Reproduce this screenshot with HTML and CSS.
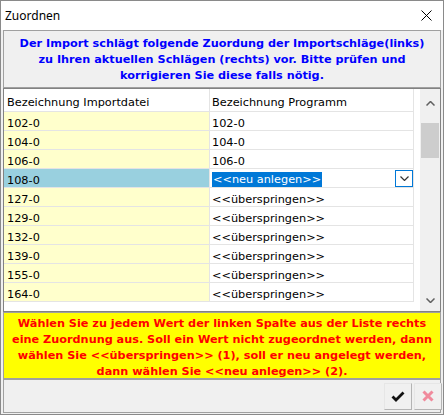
FILE: index.html
```html
<!DOCTYPE html>
<html lang="de">
<head>
<meta charset="utf-8">
<title>Zuordnen</title>
<link rel="stylesheet" href="styles.css">
</head>
<body>
<div class="window">
  <div class="titlebar">
    <span class="title">Zuordnen</span>
    <svg class="close" width="11" height="11" viewBox="0 0 11 11"><path d="M0.5 0.5 L10.5 10.5 M10.5 0.5 L0.5 10.5" stroke="#000" stroke-width="1" fill="none"/></svg>
  </div>
  <div class="client">
    <div class="panel info">
      <p>Der Import schlägt folgende Zuordung der Importschläge(links)<br>zu Ihren aktuellen Schlägen (rechts) vor. Bitte prüfen und<br>korrigieren Sie diese falls nötig.</p>
    </div>

    <div class="panel grid">
      <div class="table">
        <div class="row head">
          <div class="cell">Bezeichnung Importdatei</div>
          <div class="cell">Bezeichnung Programm</div>
        </div>
        <div class="row"><div class="cell src">102-0</div><div class="cell">102-0</div></div>
        <div class="row"><div class="cell src">104-0</div><div class="cell">104-0</div></div>
        <div class="row"><div class="cell src">106-0</div><div class="cell">106-0</div></div>
        <div class="row current">
          <div class="cell src">108-0</div>
          <div class="cell editor">
            <span class="selected-text">&lt;&lt;neu anlegen&gt;&gt;</span>
            <span class="dropdown"><svg width="9" height="5" viewBox="0 0 9 5"><path d="M0.5 0.5 L4.5 4.5 L8.5 0.5" stroke="#333" stroke-width="1.2" fill="none"/></svg></span>
          </div>
        </div>
        <div class="row"><div class="cell src">127-0</div><div class="cell">&lt;&lt;überspringen&gt;&gt;</div></div>
        <div class="row"><div class="cell src">129-0</div><div class="cell">&lt;&lt;überspringen&gt;&gt;</div></div>
        <div class="row"><div class="cell src">132-0</div><div class="cell">&lt;&lt;überspringen&gt;&gt;</div></div>
        <div class="row"><div class="cell src">139-0</div><div class="cell">&lt;&lt;überspringen&gt;&gt;</div></div>
        <div class="row"><div class="cell src">155-0</div><div class="cell">&lt;&lt;überspringen&gt;&gt;</div></div>
        <div class="row"><div class="cell src">164-0</div><div class="cell">&lt;&lt;überspringen&gt;&gt;</div></div>
      </div>
      <div class="scrollbar">
        <div class="arrow up"><svg width="9" height="5" viewBox="0 0 9 5"><path d="M0.5 4.5 L4.5 0.5 L8.5 4.5" stroke="#606060" stroke-width="1.5" fill="none"/></svg></div>
        <div class="track"><div class="thumb"></div></div>
        <div class="arrow down"><svg width="9" height="5" viewBox="0 0 9 5"><path d="M0.5 0.5 L4.5 4.5 L8.5 0.5" stroke="#606060" stroke-width="1.5" fill="none"/></svg></div>
      </div>
    </div>

    <div class="panel hint">
      <p>Wählen Sie zu jedem Wert der linken Spalte aus der Liste rechts<br>eine Zuordnung aus. Soll ein Wert nicht zugeordnet werden, dann<br>wählen Sie &lt;&lt;überspringen&gt;&gt; (1), soll er neu angelegt werden,<br>dann wählen Sie &lt;&lt;neu anlegen&gt;&gt; (2).</p>
    </div>

    <div class="panel actions">
      <button class="btn ok" type="button">
        <svg width="14" height="11" viewBox="0 0 14 11"><path d="M1.5 5.5 L5 9 L12.5 1.5" stroke="#111" stroke-width="2.8" fill="none" stroke-linejoin="miter"/></svg>
      </button>
      <button class="btn cancel" type="button" disabled>
        <svg width="12" height="12" viewBox="0 0 12 12"><path d="M1.5 1.5 L10.5 10.5 M10.5 1.5 L1.5 10.5" stroke="#f08a9c" stroke-width="3" fill="none"/></svg>
      </button>
    </div>
  </div>
</div>
</body>
</html>
```

FILE: styles.css
```css
body {
  margin: 0;
  background: #f0f0f0;
}

.window {
  width: 444px;
  height: 415px;
  box-sizing: border-box;
  border: 1px solid #8a8a8a;
  background: #f0f0f0;
  display: flex;
  flex-direction: column;
}

/* title bar */
.titlebar {
  height: 29px;
  flex: none;
  background: #fff;
  display: flex;
  align-items: center;
  justify-content: space-between;
  padding-left: 4px;
  font-family: "Noto Sans", "Open Sans", sans-serif;
  font-size: 12px;
  color: #000;
}

.close {
  margin-right: 11px;
}

/* dialog body */
.client {
  flex: 1;
  display: flex;
  flex-direction: column;
  padding: 0 2px 1px;
}

.panel {
  box-sizing: border-box;
  border: 1px solid #a0a0a0;
  flex: none;
}

.info,
.hint {
  text-align: center;
  font-family: "DejaVu Sans", sans-serif;
  font-weight: bold;
  font-size: 11.25px;
  white-space: nowrap;
}

.info p,
.hint p {
  margin: 0;
}

.info {
  height: 58px;
  color: #0000ff;
  line-height: 16px;
  padding-top: 5px;
}

/* data grid */
.grid {
  height: 224px;
  border-color: #828282;
  background: #fff;
  display: flex;
  font-family: "DejaVu Sans", sans-serif;
  font-size: 11.3px;
  color: #000;
}

.table {
  flex: 1;
}

.row {
  display: grid;
  grid-template-columns: 206px 204px;
  height: 19px;
}

.cell {
  box-sizing: border-box;
  border-right: 1px solid #e4e4e4;
  border-bottom: 1px solid #e4e4e4;
  padding: 5px 0 0 3px;
  line-height: 13px;
  white-space: nowrap;
  overflow: hidden;
}

.row .cell + .cell {
  padding-left: 2px;
}

.head {
  height: 23px;
}

.head .cell {
  padding-top: 7px;
  background: #fff;
}

.src {
  background: #ffffcc;
}

.current .src {
  background: #99d0df;
}

.editor {
  display: flex;
  align-items: flex-start;
  padding: 1px 0 0 1px;
}

.selected-text {
  background: #0078d7;
  color: #fff;
  padding: 2px 1px 0 1px;
  height: 13px;
  margin-top: 2px;
  line-height: 12px;
}

.dropdown {
  margin-left: auto;
  width: 18px;
  height: 17px;
  box-sizing: border-box;
  border: 1px solid #0078d7;
  display: flex;
  align-items: center;
  justify-content: center;
  background: #fff;
}

/* vertical scrollbar */
.scrollbar {
  width: 20px;
  background: #f0f0f0;
  display: flex;
  flex-direction: column;
}

.arrow {
  display: flex;
  align-items: center;
  justify-content: center;
}

.arrow.up {
  height: 28px;
}

.arrow.down {
  height: 22px;
}

.track {
  flex: 1;
  padding: 6px 1px 0 1px;
}

.thumb {
  height: 35px;
  background: #cdcdcd;
}

/* hint */
.hint {
  height: 67px;
  background: #ffff00;
  color: #ff0000;
  line-height: 16px;
  padding-top: 3px;
  overflow: hidden;
}

/* buttons */
.actions {
  height: 34px;
  display: flex;
  justify-content: flex-end;
  align-items: center;
  gap: 2px;
}

.btn {
  width: 28px;
  height: 27px;
  box-sizing: border-box;
  margin: 0;
  padding: 0;
  background: #f0f0f0;
  border: 1px solid;
  border-color: #e6e6e6 #b4b4b4 #b4b4b4 #e6e6e6;
  display: flex;
  align-items: center;
  justify-content: center;
}

.cancel {
  margin-right: -2px;
}
```
